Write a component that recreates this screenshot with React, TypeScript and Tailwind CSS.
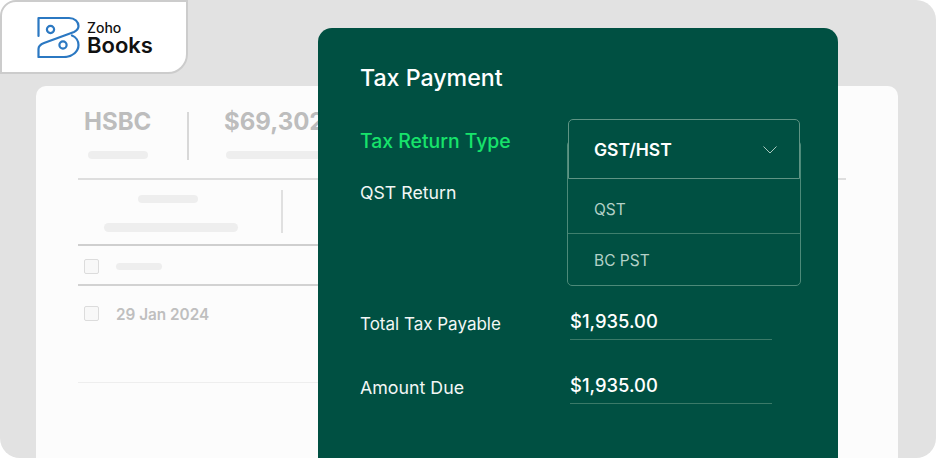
const SkeletonBar = ({ className }: { className: string }) => (
  <div className={`rounded-full bg-[#eeeeee] ${className}`} />
);

const Checkbox = () => <div className="h-[15px] w-[15px] rounded-[2px] border border-[#dcdcdc] bg-[#f8f8f8]" />;

function ZohoLogo() {
  return (
    <div className="flex items-center gap-[7px]">
      <svg width="43" height="42" viewBox="0 0 43 42" fill="none" stroke="#2b78c2" strokeWidth="2.2" strokeLinejoin="round" strokeLinecap="round">
        <path d="M1.5 20V2H32C38 2 41.5 6 41.5 10C41.5 13.5 39 15 37 16L7 27C3 28.5 1.5 30 1.5 33V41H27C36 41 41.5 35 41.5 29C41.5 25 39 21 35 19.5" />
        <circle cx="13.5" cy="13.5" r="3.6" />
        <circle cx="26" cy="29" r="3.6" />
      </svg>
      <div className="flex flex-col font-medium text-[#111]">
        <span className="text-[14px] leading-[16px]">Zoho</span>
        <span className="text-[22px] font-semibold leading-[18px]">Books</span>
      </div>
    </div>
  );
}

function BackgroundCard() {
  return (
    <div className="h-[372px] rounded-t-[10px] bg-[#fcfcfc] pl-[42px] pr-[52px] pt-[22px]">
      <div className="flex h-[72px] border-b-2 border-[#dedede]">
        <div className="flex w-[109px] flex-col pl-[6px]">
          <span className="text-[24px] font-bold leading-[28px] text-[#bdbdbd]">HSBC</span>
          <SkeletonBar className="ml-[4px] mt-[15px] h-[8px] w-[60px]" />
        </div>
        <div className="mt-[4px] h-[48px] w-[2px] bg-[#d8d8d8]" />
        <div className="flex flex-col pl-[35px]">
          <span className="text-[24px] font-bold leading-[28px] text-[#bdbdbd]">$69,302</span>
          <SkeletonBar className="ml-[2px] mt-[15px] h-[8px] w-[100px]" />
        </div>
      </div>
      {/* these rows stop under the panel, only the top rule shows on its right */}
      <div className="mr-[200px]">
        <div className="flex h-[66px] border-b-2 border-[#cfcfcf] pt-[10px]">
          <div className="flex h-[43px] w-[205px] flex-col border-r-2 border-[#e0e0e0] pt-[5px]">
            <SkeletonBar className="ml-[60px] h-[8px] w-[60px]" />
            <SkeletonBar className="ml-[26px] mt-[20px] h-[9px] w-[134px]" />
          </div>
        </div>
        <div className="flex h-[40px] items-center gap-[17px] border-b-2 border-[#d2d2d2] pl-[6px] pt-[2px]">
          <Checkbox />
          <SkeletonBar className="h-[7px] w-[46px]" />
        </div>
        <div className="flex h-[97px] items-start gap-[17px] border-b border-[#eeeeee] pl-[6px] pt-[20px]">
          <Checkbox />
          <span className="pt-[1px] text-[15.3px] font-semibold leading-[16px] text-[#bfbfbf]">29 Jan 2024</span>
        </div>
      </div>
    </div>
  );
}

function AmountRow({ label, value, labelSize }: { label: string; value: string; labelSize: string }) {
  return (
    <div className="flex h-[64px] items-start">
      <span className={`w-[210px] pt-[7px] leading-[24px] text-[#f2f7f5] ${labelSize}`}>{label}</span>
      <div className="w-[202px] border-b border-[#3b7a68] pb-[6px] pt-[4px] text-[18.4px] font-medium leading-[24px] text-white">
        {value}
      </div>
    </div>
  );
}

function TaxTypeSelect() {
  return (
    <div className="w-[234px]">
      <div className="relative z-10 mx-px flex h-[60px] items-center justify-between rounded-t-[5px] border border-[#5f9484] bg-[#005042] pl-[25px] pr-[22px]">
        <span className="pt-[3px] text-[17.5px] font-semibold text-white">GST/HST</span>
        <svg className="mt-[2px]" width="14" height="8" viewBox="0 0 14 8" fill="none" stroke="#a9c9bf" strokeWidth="1">
          <path d="M0.5 0.5L7 7L13.5 0.5" />
        </svg>
      </div>
      <div className="-mt-[39px] rounded-[5px] border border-[#4d8a79] pt-[38px]">
        <div className="flex h-[55px] items-center border-b border-[#3f7f6d] pl-[26px] pt-[7px] text-[15.5px] text-[#b3d0c7]">QST</div>
        <div className="flex h-[51px] items-center pl-[26px] pt-[2px] text-[15.5px] text-[#b3d0c7]">BC PST</div>
      </div>
    </div>
  );
}

function TaxPanel() {
  return (
    <div className="absolute left-[318px] top-[28px] h-[430px] w-[520px] rounded-t-[14px] bg-[#005042] pl-[42px]">
      <h1 className="pt-[36px] text-[23.2px] font-medium leading-[28px] text-white">Tax Payment</h1>
      <div className="mt-[27px] flex">
        <div className="w-[207px] shrink-0">
          <div className="pt-[9px] text-[19.4px] font-medium leading-[26px] text-[#17e36b]">Tax Return Type</div>
          <div className="mt-[26px] text-[17.7px] leading-[26px] text-[#f2f7f5]">QST Return</div>
        </div>
        <TaxTypeSelect />
      </div>
      <div className="mt-[19px]">
        <AmountRow label="Total Tax Payable" value="$1,935.00" labelSize="text-[17px]" />
        <AmountRow label="Amount Due" value="$1,935.00" labelSize="text-[17.8px]" />
      </div>
    </div>
  );
}

export default function App() {
  return (
    <div className="relative h-[458px] w-[936px] overflow-hidden bg-white" style={{ fontFamily: "Inter, sans-serif" }}>
      <div className="h-full rounded-[20px] bg-[#e2e2e2] pl-[36px] pr-[38px] pt-[86px]">
        <BackgroundCard />
      </div>
      <TaxPanel />
      <div className="absolute left-0 top-0 flex h-[74px] w-[188px] items-center rounded-br-[20px] rounded-tl-[16px] border-2 border-[#cccccc] bg-white pl-[35px]">
        <ZohoLogo />
      </div>
    </div>
  );
}
